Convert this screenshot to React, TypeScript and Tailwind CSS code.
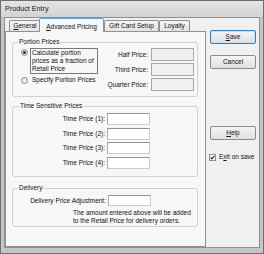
import React from "react";

function Radio({ checked }: { checked?: boolean }) {
  return (
    <span className="w-[7px] h-[7px] rounded-full border border-[#8a8a8a] bg-gradient-to-br from-[#dcdcdc] to-[#fbfbfb] flex items-center justify-center shrink-0">
      {checked && <span className="w-[3px] h-[3px] rounded-full bg-[#1a1a1a]" />}
    </span>
  );
}

function Tab({ w, children }: { w: string; children: React.ReactNode }) {
  return (
    <div
      className={`${w} h-[11px] border border-b-0 border-[#8e9196] rounded-t-[2px] bg-gradient-to-b from-[#f5f5f5] to-[#e3e3e3] flex items-center justify-center whitespace-nowrap`}
    >
      {children}
    </div>
  );
}

function Btn({ def, children }: { def?: boolean; children: React.ReactNode }) {
  return (
    <div
      className={`w-[46px] h-[14px] shrink-0 rounded-[2px] border flex items-center justify-center bg-gradient-to-b from-[#f5f5f5] to-[#dfdfdf] ${
        def ? "border-[#3c7fb1] shadow-[inset_0_0_0_1px_#c4e2f6]" : "border-[#8c8c8c]"
      }`}
    >
      {children}
    </div>
  );
}

function DisabledInput() {
  return <div className="w-[43px] h-[13px] border border-[#a3a6aa] bg-[#f0f0f0]" />;
}

function Input({ h }: { h: string }) {
  return (
    <div
      className={`w-[43px] ${h} border border-[#c8ccd2] border-t-[#8f939a] border-l-[#abafb5] bg-white`}
    />
  );
}

export default function App() {
  const timeRows = ["Time Price (1):", "Time Price (2):", "Time Price (3):", "Time Price (4):"];
  return (
    <div className="w-[264px] h-[254px] bg-[#c6c6c6] border border-[#6f6f6f] flex flex-col font-['Liberation_Sans',Arial,sans-serif] text-[6.5px] leading-[8px] text-[#111] overflow-hidden">
      <div className="h-[16px] shrink-0 flex items-center px-[4px] bg-gradient-to-b from-[#e4e4e4] to-[#d3d3d3] text-[7.2px] text-[#1a1a1a]">
        Product Entry
      </div>
      <div className="flex-1 mx-[3px] mb-[5px] border border-[#8f8f8f] bg-[#f0f0f0] flex">
        <div className="w-[201px] shrink-0 flex flex-col">
          <div className="h-[13px] shrink-0 flex items-end pl-[4px]">
            <Tab w="w-[32px]">
              <span>
                <u className="underline-offset-1">G</u>eneral
              </span>
            </Tab>
            <div className="relative z-10 -ml-[2px] -mb-[1px] w-[65px] h-[14px] border border-b-0 border-[#8e9196] border-t-[#6aa2d8] rounded-t-[2px] bg-[#f7f7f7] flex items-center justify-center pt-[2px] whitespace-nowrap">
              <span>
                <u className="underline-offset-1">A</u>dvanced Pricing
              </span>
            </div>
            <Tab w="w-[55px]">Gift Card Setup</Tab>
            <Tab w="w-[31px]">Loyalty</Tab>
          </div>
          <div className="flex-1 border border-[#8e9196] bg-[#f7f7f7] pt-[6px] pl-[6px] pr-[7px] flex flex-col">
            {/* Portion Prices */}
            <fieldset className="border border-[#cdd3d8] rounded-[3px] pt-[2px] pb-[5px] flex">
              <legend className="ml-[5px] px-[1px] leading-[8px]">Portion Prices</legend>
              <div className="flex w-full justify-between">
                <div className="flex flex-col pl-[8px]">
                  <div className="flex items-start gap-[2px]">
                    <div className="mt-[1px]">
                      <Radio checked />
                    </div>
                    <div className="w-[68px] border border-[#7a7a7a] px-[1px] leading-[8px] whitespace-nowrap">
                      Calculate portion
                      <br />
                      prices as a fraction of
                      <br />
                      Retail Price
                    </div>
                  </div>
                  <div className="flex items-center gap-[4px] mt-[2px]">
                    <Radio />
                    <span className="whitespace-nowrap">Specify Portion Prices</span>
                  </div>
                </div>
                <div className="flex flex-col gap-[2px] pr-[3px]">
                  {["Half Price:", "Third Price:", "Quarter Price:"].map((l) => (
                    <div key={l} className="flex items-center justify-end gap-[3px]">
                      <span className="whitespace-nowrap">{l}</span>
                      <DisabledInput />
                    </div>
                  ))}
                </div>
              </div>
            </fieldset>

            {/* Time Sensitive Prices */}
            <fieldset className="mt-[5px] border border-[#cdd3d8] rounded-[3px] pt-[3px] pb-[7.5px]">
              <legend className="ml-[6px] px-[1px] leading-[8px]">Time Sensitive Prices</legend>
              <div className="flex flex-col gap-[2.5px]">
                {timeRows.map((l) => (
                  <div key={l} className="flex items-center gap-[2px]">
                    <span className="w-[92px] text-right whitespace-nowrap">{l}</span>
                    <Input h="h-[12px]" />
                  </div>
                ))}
              </div>
            </fieldset>

            {/* Delivery */}
            <fieldset className="mt-[7px] border border-[#cdd3d8] rounded-[3px] pt-[3px] pb-[1px]">
              <legend className="ml-[5px] px-[1px] leading-[8px]">Delivery</legend>
              <div className="flex items-center gap-[2px]">
                <span className="w-[93px] text-right whitespace-nowrap">Delivery Price Adjustment:</span>
                <Input h="h-[11px]" />
              </div>
              <div className="mt-[3px] pl-[60px] leading-[8px] whitespace-nowrap">
                The amount entered above will be added
                <br />
                to the Retail Price for delivery orders.
              </div>
            </fieldset>
          </div>
        </div>
        <div className="flex-1 flex flex-col pl-[4px] pt-[12px]">
          <Btn def>
            <span>
              <u className="underline-offset-1">S</u>ave
            </span>
          </Btn>
          <div className="mt-[11px]">
            <Btn>Cancel</Btn>
          </div>
          <div className="mt-[57px]">
            <Btn>
              <span>
                <u className="underline-offset-1">H</u>elp
              </span>
            </Btn>
          </div>
          <div className="mt-[13px] -ml-[1px] flex items-center gap-[3px]">
            <span className="w-[7px] h-[7px] border border-[#8e8f8f] bg-white flex items-center justify-center shrink-0">
              <svg width="5" height="5" viewBox="0 0 5 5">
                <path d="M0.6 2.4 L1.9 3.8 L4.4 0.8" fill="none" stroke="#222" strokeWidth="1.1" />
              </svg>
            </span>
            <span className="whitespace-nowrap">
              E<u className="underline-offset-1">x</u>it on save
            </span>
          </div>
        </div>
      </div>
    </div>
  );
}
